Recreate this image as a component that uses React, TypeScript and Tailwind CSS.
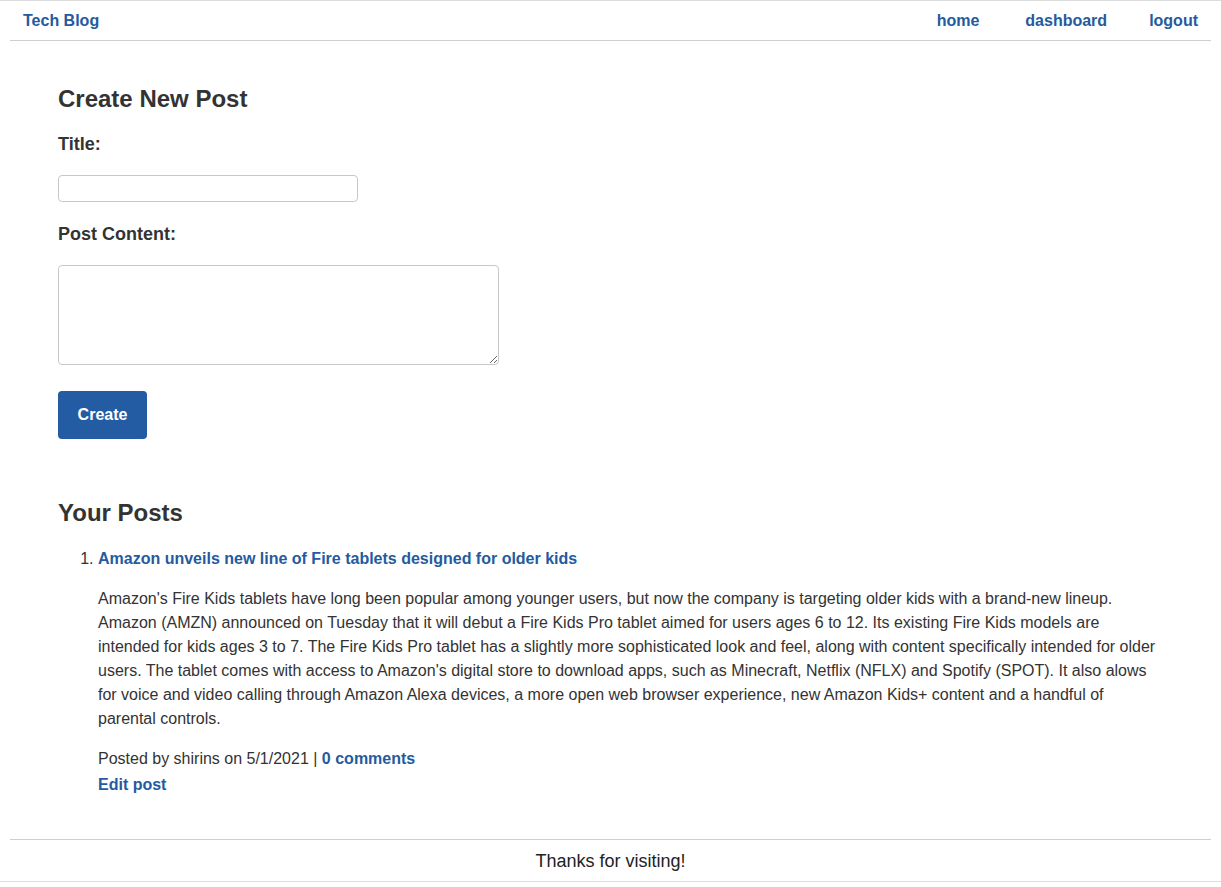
import React from "react";

const LINK = "text-[#245b9f] font-bold";

export default function App() {
  return (
    <div className="min-h-[887px] bg-white text-[#333] text-[16px] font-['Liberation_Sans',Arial,sans-serif]">
      <div className="border-t border-[#dcdcdc]" />
      <header className="mx-[10px] flex h-[40px] items-center justify-between border-b border-[#cfcfcf] pl-[13px] pr-[13px]">
        <a href="#" className={LINK}>
          Tech Blog
        </a>
        <nav className="flex items-center">
          <a href="#" className={LINK}>home</a>
          <a href="#" className={`${LINK} ml-[46px]`}>dashboard</a>
          <a href="#" className={`${LINK} ml-[42px]`}>logout</a>
        </nav>
      </header>

      <main className="mx-[58px] h-[798px]">
        <section className="pt-[42px]">
          <h2 className="text-[24px] font-bold leading-[32px]">Create New Post</h2>
          <form onSubmit={(e) => e.preventDefault()}>
            <label className="mt-[16px] block text-[18px] font-bold leading-[26px]">Title:</label>
            <input
              type="text"
              className="mt-[18px] block h-[27px] w-[300px] rounded-[4px] border border-[#c8c8c8] px-2 outline-none"
            />
            <label className="mt-[19px] block text-[18px] font-bold leading-[26px]">Post Content:</label>
            <textarea className="mt-[18px] block h-[100px] w-[441px] rounded-[4px] border border-[#c8c8c8] px-2 outline-none" />
            <button
              type="submit"
              className="mt-[26px] h-[48px] w-[89px] rounded-[4px] bg-[#235ca3] font-bold text-white"
            >
              Create
            </button>
          </form>
        </section>

        <section className="mt-[58px]">
          <h2 className="text-[24px] font-bold leading-[32px]">Your Posts</h2>
          <ol className="mt-[18px] list-decimal pl-[40px]">
            <li className="leading-[24px]">
              <a href="#" className={LINK}>
                Amazon unveils new line of Fire tablets designed for older kids
              </a>
              <p className="mt-[16px] leading-[24px]">
                Amazon's Fire Kids tablets have long been popular among younger users, but now the company is
                targeting older kids with a brand-new lineup. Amazon (AMZN) announced on Tuesday that it will debut a
                Fire Kids Pro tablet aimed for users ages 6 to 12. Its existing Fire Kids models are intended for kids
                ages 3 to 7. The Fire Kids Pro tablet has a slightly more sophisticated look and feel, along with
                content specifically intended for older users. The tablet comes with access to Amazon's digital store
                to download apps, such as Minecraft, Netflix (NFLX) and Spotify (SPOT). It also alows for voice and
                video calling through Amazon Alexa devices, a more open web browser experience, new Amazon Kids+
                content and a handful of parental controls.
              </p>
              <p className="mt-[16px] leading-[24px]">
                Posted by shirins on 5/1/2021 |{" "}
                <a href="#" className={LINK}>
                  0 comments
                </a>
              </p>
              <p className="mt-[2px] leading-[24px]">
                <a href="#" className={LINK}>
                  Edit post
                </a>
              </p>
            </li>
          </ol>
        </section>
      </main>

      <footer className="mx-[10px] border-t border-[#cfcfcf]">
        <p className="h-[41px] pt-[9px] text-center text-[18px] leading-[24px] text-[#222]">Thanks for visiting!</p>
      </footer>
      <div className="border-t border-[#dcdcdc]" />
    </div>
  );
}
